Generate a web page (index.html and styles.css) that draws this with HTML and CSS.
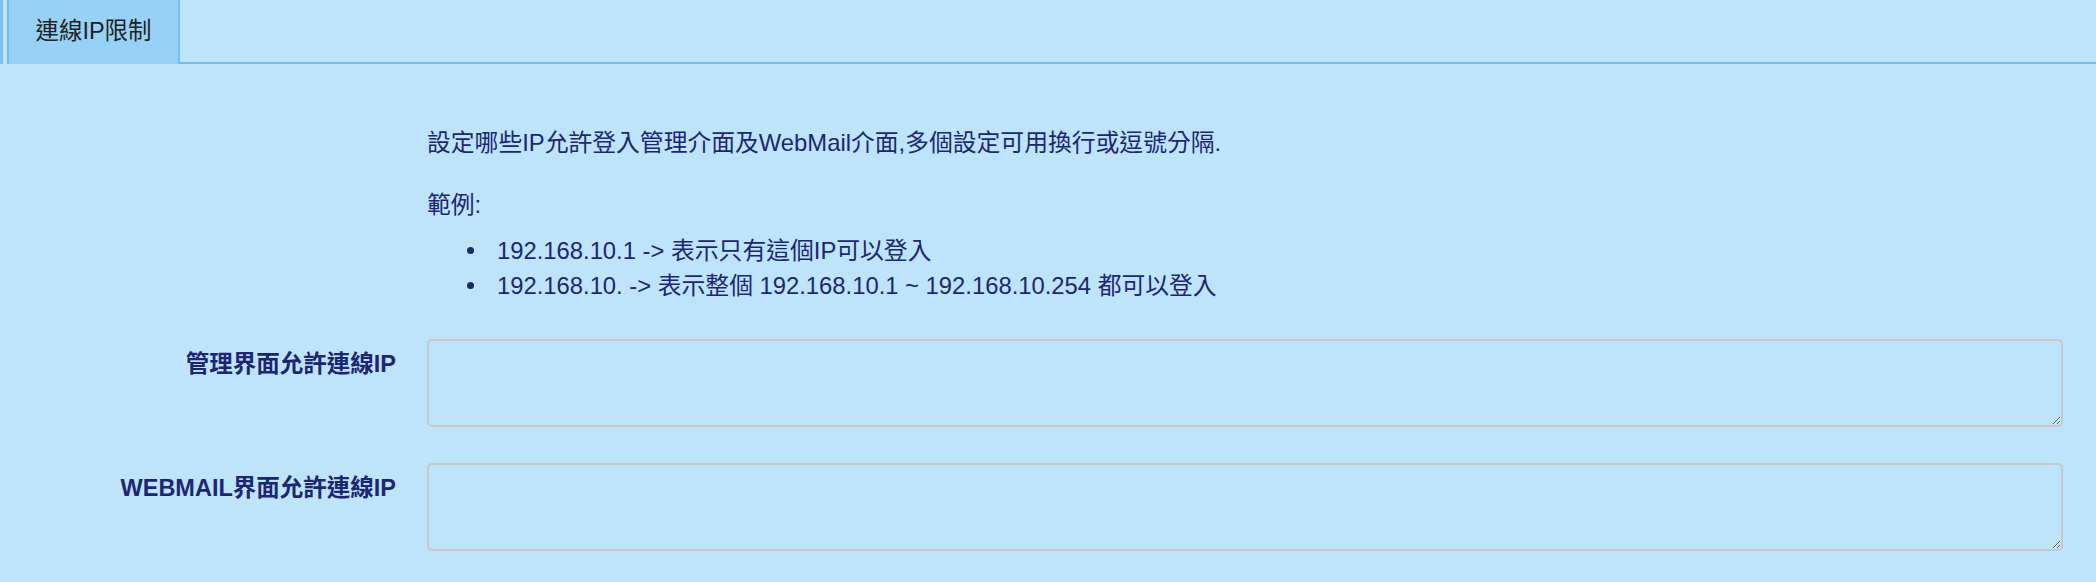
FILE: index.html
```html
<!DOCTYPE html>
<html lang="zh-Hant">
<head>
<meta charset="utf-8">
<title>連線IP限制</title>
<link rel="stylesheet" href="styles.css">
</head>
<body>
<div class="tabbar">
  <div class="strip"></div>
  <div class="spacer"></div>
  <div class="tab">連線IP限制</div>
  <div class="filler"></div>
</div>
<div class="content">
  <div class="row intro">
    <div class="label"></div>
    <div class="field">
      <p class="desc">設定哪些IP允許登入管理介面及WebMail介面,多個設定可用換行或逗號分隔.</p>
      <p class="example">範例:</p>
      <ul class="list">
        <li>192.168.10.1 -&gt; 表示只有這個IP可以登入</li>
        <li>192.168.10. -&gt; 表示整個 192.168.10.1 ~ 192.168.10.254 都可以登入</li>
      </ul>
    </div>
  </div>
  <div class="row">
    <div class="label">管理界面允許連線IP</div>
    <div class="field"><textarea class="box"></textarea></div>
  </div>
  <div class="row">
    <div class="label">WEBMAIL界面允許連線IP</div>
    <div class="field"><textarea class="box"></textarea></div>
  </div>
</div>
</body>
</html>
```

FILE: styles.css
```css
html, body {
  margin: 0;
  padding: 0;
  background: #bde4f8;
}
body {
  font-family: "Liberation Sans", "Noto Sans CJK TC", sans-serif;
  font-size: 23.5px;
  line-height: 35px;
  color: #1c2676;
}
.tabbar {
  display: flex;
  height: 64px;
}
.strip {
  width: 3px;
  background: #7cc3f1;
}
.spacer {
  width: 4px;
}
.tab {
  width: 169px;
  border-left: 2px solid #73bef0;
  border-right: 2px solid #73bef0;
  background: #96d2f5;
  color: #222;
  font-size: 23.5px;
  display: flex;
  align-items: center;
  justify-content: center;
  padding-bottom: 2px;
  box-sizing: content-box;
}
.filler {
  flex: 1;
  border-bottom: 2px solid #73bef0;
}
.content {
  padding: 0 33px 0 0;
  display: flex;
  flex-direction: column;
  gap: 36px;
}
.row {
  display: flex;
  align-items: flex-start;
}
.intro {
  padding-top: 61px;
}
.label {
  width: 396px;
  padding-right: 31px;
  flex: none;
  text-align: right;
  font-weight: bold;
  color: #1d2575;
  padding-top: 8px;
}
.intro .label {
  padding-top: 0;
}
.field {
  flex: 1;
  min-width: 0;
}
.intro .field {
  font-size: 23.8px;
}
.desc {
  margin: 0 0 27px 0;
}
.example {
  margin: 0 0 11px 0;
}
.list {
  margin: 0;
  padding-left: 70px;
  list-style: none;
}
.list li {
  position: relative;
}
.list li::before {
  content: "";
  position: absolute;
  left: -30px;
  top: 14px;
  width: 7px;
  height: 7px;
  border-radius: 50%;
  background: #1c2676;
}
.box {
  display: block;
  width: 100%;
  height: 88px;
  box-sizing: border-box;
  margin: 0;
  padding: 4px;
  background: transparent;
  border: 2px solid #c8c8c8;
  border-radius: 5px;
  font-family: inherit;
  font-size: 20px;
  resize: vertical;
}
```
